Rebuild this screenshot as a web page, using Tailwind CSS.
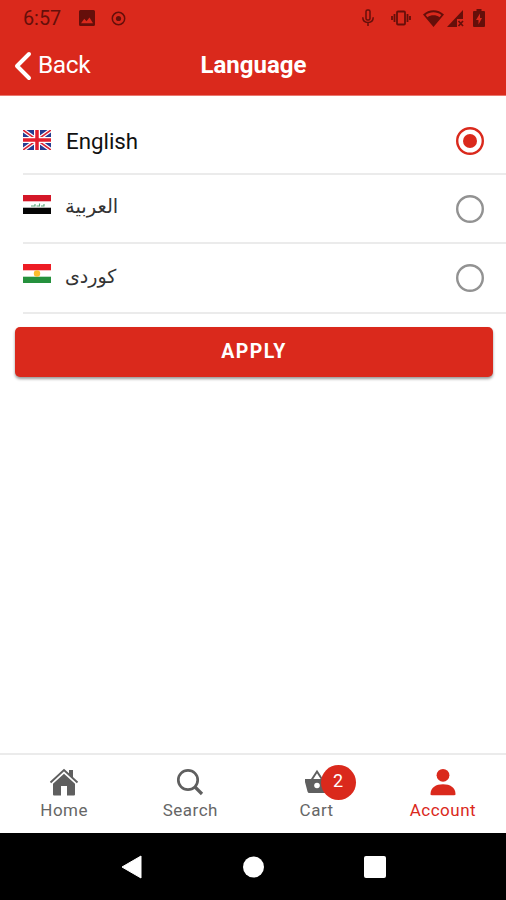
<!DOCTYPE html>
<html lang="en">
<head>
<meta charset="utf-8">
<meta name="viewport" content="width=device-width, initial-scale=1">
<title>Language</title>
<script src="https://cdn.jsdelivr.net/npm/@tailwindcss/browser@4"></script>
</head>
<body class="bg-white">
<div class="flex h-[900px] w-[506px] flex-col overflow-hidden font-['Roboto',sans-serif]">
  <header class="h-24 shrink-0 border-b border-[#e9776e] bg-[#da291c] text-white">
    <div class="flex h-9 items-center pr-[21px] pl-[23px] text-[#650f0a]">
      <span class="w-14 pt-0.5 text-[19.800px] leading-[34px]">6:57</span>
      <svg class="h-4 w-4" viewBox="0 0 16 16"><path fill="currentColor" fill-rule="evenodd" d="M1.500 0h13A1.500 1.500 0 0 1 16 1.500v13a1.500 1.500 0 0 1-1.500 1.500h-13A1.500 1.500 0 0 1 0 14.500v-13A1.500 1.500 0 0 1 1.500 0ZM2 13.300h12L10.500 7.500 7.500 11.300 5.300 8.800Z"/></svg>
      <svg class="ml-4 h-[15px] w-[15px]" viewBox="0 0 15 15"><circle cx="7.500" cy="7.500" r="6.200" fill="none" stroke="currentColor" stroke-width="1.500"/><circle cx="7.500" cy="7.500" r="2.600" fill="currentColor"/></svg>
      <div class="ml-auto flex items-center">
        <svg class="h-[18px] w-3" viewBox="0 0 12 18" fill="none" stroke="currentColor" stroke-width="1.500"><rect x="4" y="1" width="4" height="10" rx="1.500"/><path d="M.8 8.200c0 3.500 2.200 5.200 5.200 5.200s5.200-1.700 5.200-5.200M6 13.400V17"/></svg>
        <svg class="ml-[17px] h-4 w-5" viewBox="0 0 20 16" fill="none" stroke="currentColor" stroke-width="1.800"><rect x="6" y="1.500" width="8" height="13" rx="1"/><path d="M3.500 4v8M16.500 4v8M1 6v4M19 6v4"/></svg>
        <svg class="ml-3 h-[17px] w-[21px]" viewBox="0 0 21 17"><path fill="currentColor" fill-rule="evenodd" d="M0 4.500C6-1.200 15-1.200 21 4.500L10.500 17ZM2.600 5 4.500 7.200C8 4.600 13 4.600 16.500 7.200L18.400 5C14 1.300 7 1.300 2.600 5Z"/></svg>
        <svg class="ml-[3px] h-[17px] w-[17px]" viewBox="0 0 17 17"><path fill="currentColor" d="M16 0v9h-6v8H0Z"/><path d="m11.500 11 4.500 5m0-5-4.500 5" stroke="currentColor" stroke-width="1.700"/></svg>
        <svg class="ml-[9px] h-[18px] w-3" viewBox="0 0 12 18"><path fill="currentColor" fill-rule="evenodd" d="M3.500 0h5v2H11a1 1 0 0 1 1 1v14a1 1 0 0 1-1 1H1a1 1 0 0 1-1-1V3a1 1 0 0 1 1-1h2.500ZM7 4.500 3 11h2.500v4.500L9 9H7Z"/></svg>
      </div>
    </div>
    <div class="grid h-[59px] grid-cols-3 items-center pl-3.5">
      <button class="flex items-center text-[24.500px] leading-none tracking-[-0.400px]">
        <svg class="mr-[6px] h-[30px] w-[18px]" viewBox="0 0 18 30" fill="none" stroke="currentColor" stroke-width="4" stroke-linecap="round" stroke-linejoin="round"><path d="M15 3 3 15l12 12"/></svg>Back
      </button>
      <h1 class="mr-3.5 pb-px pl-px text-center text-[24px] leading-none font-bold">Language</h1>
    </div>
  </header>

  <main class="flex-1 pt-[9px]">
    <ul class="pl-[23px]">
      <li class="flex h-[70px] items-center border-b-2 border-[#ebebeb] pt-[3px] pr-[22px]">
        <svg class="mb-0.5 h-5 w-7" viewBox="0 0 28 20"><path fill="#263b91" d="M0 0h28v20H0z"/><path d="m0 0 28 20M28 0 0 20" stroke="#fff" stroke-width="4"/><path d="m0 0 28 20M28 0 0 20" stroke="#da2436" stroke-width="1.600"/><path d="M14 0v20M0 10h28" stroke="#fff" stroke-width="6"/><path d="M14 0v20M0 10h28" stroke="#e31e2d" stroke-width="3.500"/></svg>
        <span class="ml-[15px] pt-0.5 text-[22.300px] leading-none text-[#111]">English</span>
        <svg class="ml-auto h-7 w-7" viewBox="0 0 28 28"><circle cx="14" cy="14" r="12.800" fill="none" stroke="#da291c" stroke-width="2.400"/><circle cx="14" cy="14" r="7" fill="#da291c"/></svg>
      </li>
      <li class="flex h-[69px] items-center border-b-2 border-[#ebebeb] pr-[22px]">
        <svg class="mb-[9px] h-[19px] w-7" viewBox="0 0 28 19"><path fill="#fff" d="M0 0h28v19H0z"/><path fill="#d41728" d="M0 0h28v6.300H0z"/><path fill="#050505" d="M0 12.700h28V19H0z"/><path d="M8 11h4V9m1.500 2h3V8.500m1.500 2.500h3V9" fill="none" stroke="#5ca77b" stroke-width="1.100"/></svg>
        <span dir="rtl" lang="ar" class="ml-3.5 pb-[3px] font-['DejaVu_Sans',sans-serif] text-[19.500px] leading-none text-[#333]">العربية</span>
        <svg class="ml-auto h-7 w-7" viewBox="0 0 28 28"><circle cx="14" cy="14" r="12.800" fill="none" stroke="#929292" stroke-width="2.400"/></svg>
      </li>
      <li class="flex h-[70px] items-center border-b-2 border-[#ebebeb] pr-[22px]">
        <svg class="mb-[9px] h-[19px] w-7" viewBox="0 0 28 19"><path fill="#fff" d="M0 0h28v19H0z"/><path fill="#ed1c24" d="M0 0h28v6.300H0z"/><path fill="#25913d" d="M0 12.700h28V19H0z"/><circle cx="14" cy="9.500" r="3.200" fill="#fbbd2d"/></svg>
        <span dir="rtl" lang="ckb" class="ml-3.5 pb-[3px] font-['DejaVu_Sans',sans-serif] text-[19px] leading-none text-[#333]">كوردی</span>
        <svg class="ml-auto h-7 w-7" viewBox="0 0 28 28"><circle cx="14" cy="14" r="12.800" fill="none" stroke="#929292" stroke-width="2.400"/></svg>
      </li>
    </ul>
    <div class="pt-[13px] pr-[13px] pl-[15px]">
      <button class="h-[50px] w-full rounded-[5px] bg-[#da291c] pb-px text-[19.500px] leading-none font-bold tracking-[1.400px] text-white shadow-[0_2px_3px_rgba(0,0,0,0.4)]">APPLY</button>
    </div>
  </main>

  <nav class="grid h-[80px] shrink-0 grid-cols-4 border-t-2 border-[#ebebeb] pl-px text-[17px] leading-5 tracking-[0.500px] text-[#666]">
    <a class="flex flex-col items-center pt-3">
      <svg class="h-[30px] w-[30px]" viewBox="0 0 30 30" fill="#5f5f5f"><path d="M20 3h4v8l-4-4ZM15 6.800l11 10V27.500a1 1 0 0 1-1 1h-7V19h-6v9.500H5a1 1 0 0 1-1-1V16.800Z"/><path d="M1.500 15.500 15 3l13.500 12.500" fill="none" stroke="#5f5f5f" stroke-width="1.900"/></svg>
      <span class="mt-[3px]">Home</span>
    </a>
    <a class="flex flex-col items-center pt-3">
      <svg class="h-[30px] w-[30px]" viewBox="0 0 30 30" fill="none" stroke="#5f5f5f"><circle cx="13" cy="13" r="9.700" stroke-width="2.700"/><path d="m20 20 7 7" stroke-width="3.200"/></svg>
      <span class="mt-[3px]">Search</span>
    </a>
    <a class="flex flex-col items-center pt-3">
      <span class="relative">
        <svg class="h-[30px] w-[30px]" viewBox="0 0 30 30"><path d="m9.500 13 5.500-8.500 5.500 8.500" fill="none" stroke="#5f5f5f" stroke-width="2"/><path fill="#5f5f5f" d="M3 12h24v3l-2.500 9.500a2 2 0 0 1-2 1.500h-15a2 2 0 0 1-2-1.500L3 15Z"/><circle cx="15" cy="18.500" r="2.800" fill="#fff"/></svg>
        <span class="absolute -top-[2px] left-[19px] flex h-[35px] w-[35px] items-center justify-center rounded-full bg-[#da291c] pb-1 text-[18px] tracking-normal text-white">2</span>
      </span>
      <span class="mt-[3px]">Cart</span>
    </a>
    <a class="flex flex-col items-center pt-3 text-[#da291c]">
      <svg class="h-[30px] w-[30px]" viewBox="0 0 30 30" fill="currentColor"><circle cx="15" cy="8.300" r="6.400"/><path d="M2.500 27C2.500 20.500 8 17.300 15 17.300S27.500 20.500 27.500 27c0 .8-.5 1.200-1.200 1.200H3.700c-.7 0-1.200-.4-1.200-1.200Z"/></svg>
      <span class="mt-[3px]">Account</span>
    </a>
  </nav>

  <footer class="grid h-[67px] shrink-0 grid-cols-[71px_121px_122px_121px_71px] items-center bg-black">
    <svg class="col-start-2 h-6 w-6 justify-self-center" viewBox="0 0 24 24"><path d="m2 12 19-11v22Z" fill="#fff" stroke="#fff" stroke-linejoin="round"/></svg>
    <svg class="h-[22px] w-[22px] justify-self-center" viewBox="0 0 22 22"><circle cx="11.500" cy="11" r="10.500" fill="#fff"/></svg>
    <svg class="h-[22px] w-[22px] justify-self-center" viewBox="0 0 22 22"><rect width="22" height="22" rx="2" fill="#fff"/></svg>
  </footer>
</div>
</body>
</html>
